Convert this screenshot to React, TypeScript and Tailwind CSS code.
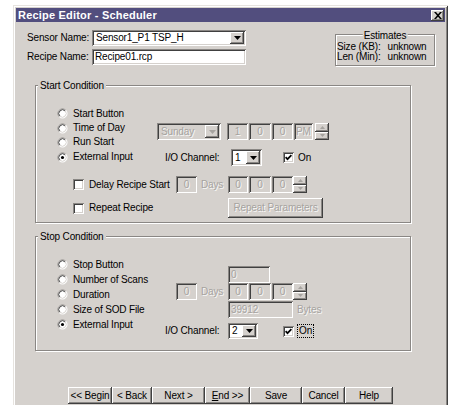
import React from "react";

const BG = "bg-[#d5d1cd]";
const RAISED =
  "shadow-[inset_-1px_-1px_0_#404040,inset_1px_1px_0_#ffffff,inset_-2px_-2px_0_#8a8784]";
const SUNKEN =
  "shadow-[inset_1px_1px_0_#8a8784,inset_-1px_-1px_0_#ffffff,inset_2px_2px_0_#404040,inset_-2px_-2px_0_#d5d1cd]";
const DIS = "text-[#a6a39f] [text-shadow:1px_1px_0_rgba(255,255,255,0.85)]";

function Arrow({ disabled, up, small }: { disabled?: boolean; up?: boolean; small?: boolean }) {
  const fill = disabled ? "#a6a39f" : "#000";
  if (small) {
    return (
      <svg width="5" height="3" viewBox="0 0 5 3">
        <path d={up ? "M0 3h5L2.5 0z" : "M0 0h5L2.5 3z"} fill={fill} />
      </svg>
    );
  }
  return (
    <svg width="7" height="4" viewBox="0 0 7 4">
      <path d="M0 0h7L3.5 4z" fill={fill} />
    </svg>
  );
}

function Combo({ value, className, disabled }: { value: string; className: string; disabled?: boolean }) {
  return (
    <div className={`${className} ${SUNKEN} p-[2px] flex shrink-0 ${disabled ? BG : "bg-white"}`}>
      <span className={`flex-1 flex items-center pl-[2px] ${disabled ? DIS : ""}`}>{value}</span>
      <div className={`w-[14px] h-full ${BG} ${RAISED} flex items-center justify-center shrink-0`}>
        <Arrow disabled={disabled} />
      </div>
    </div>
  );
}

function Box({
  children,
  className,
  disabled,
  center,
}: {
  children?: React.ReactNode;
  className: string;
  disabled?: boolean;
  center?: boolean;
}) {
  return (
    <div
      className={`${className} ${SUNKEN} shrink-0 flex items-center px-[3px] ${
        disabled ? `${BG} ${DIS}` : "bg-white"
      } ${center ? "justify-center" : ""}`}
    >
      {children}
    </div>
  );
}

function Spinner({ className }: { className: string }) {
  return (
    <div className={`${className} flex flex-col shrink-0`}>
      <div className={`flex-1 ${BG} ${RAISED} flex items-center justify-center`}>
        <Arrow small up disabled />
      </div>
      <div className={`flex-1 ${BG} ${RAISED} flex items-center justify-center`}>
        <Arrow small disabled />
      </div>
    </div>
  );
}

function Radio({ checked }: { checked?: boolean }) {
  return (
    <svg width="11" height="11" viewBox="0 0 12 12" className="shrink-0">
      <circle cx="6" cy="6" r="5" fill="#ffffff" />
      <path d="M2.46 9.54A5 5 0 0 1 9.54 2.46" stroke="#8a8784" fill="none" />
      <path d="M9.54 2.46A5 5 0 0 1 2.46 9.54" stroke="#ffffff" fill="none" />
      <path d="M3.17 8.83A4 4 0 0 1 8.83 3.17" stroke="#404040" fill="none" />
      <path d="M8.83 3.17A4 4 0 0 1 3.17 8.83" stroke="#d5d1cd" fill="none" />
      {checked && <circle cx="6" cy="6" r="1.7" fill="#000" />}
    </svg>
  );
}

function Check({ checked, className = "" }: { checked?: boolean; className?: string }) {
  return (
    <div className={`w-[11px] h-[11px] bg-white ${SUNKEN} flex items-center justify-center shrink-0 ${className}`}>
      {checked && (
        <svg width="7" height="7" viewBox="0 0 7 7">
          <polyline points="0.6,3.2 2.5,5.2 6.4,1.2" fill="none" stroke="#000" strokeWidth="1.7" />
        </svg>
      )}
    </div>
  );
}

function RadioRow({ label, checked, className }: { label: string; checked?: boolean; className: string }) {
  return (
    <div className={`flex items-center ${className}`}>
      <Radio checked={checked} />
      <span className="ml-[5px]">{label}</span>
    </div>
  );
}

function Group({
  title,
  className,
  children,
}: {
  title: string;
  className: string;
  children: React.ReactNode;
}) {
  return (
    <div className={`relative border border-[#8a8784] shadow-[inset_1px_1px_0_#ffffff,1px_1px_0_#ffffff] shrink-0 ${className}`}>
      <span className={`absolute left-[2px] top-[-6px] ${BG} px-[2px] leading-[11px]`}>{title}</span>
      {children}
    </div>
  );
}

function Btn({ children, className, disabled }: { children: React.ReactNode; className: string; disabled?: boolean }) {
  return (
    <div className={`${className} ${BG} ${RAISED} flex items-center justify-center shrink-0 ${disabled ? DIS : ""}`}>
      {children}
    </div>
  );
}

export default function App() {
  return (
    <div className="w-[451px] h-[405px] bg-white overflow-hidden font-['Liberation_Sans',Arial,sans-serif] text-[10px] leading-none tracking-[-0.15px] text-black select-none">
      <div
        className={`ml-[13px] mt-[5px] w-[435px] h-[410px] ${BG} p-[3px] flex flex-col shadow-[inset_1px_1px_0_#e6e3df,inset_-1px_-1px_0_#404040,inset_2px_2px_0_#ffffff,inset_-2px_-2px_0_#8a8784]`}
      >
        {/* caption */}
        <div className="h-[14px] bg-[#524e7e] flex items-center justify-between pl-[2px] pr-[1px] shrink-0">
          <span className="text-white font-bold text-[11px] tracking-[0.2px]">Recipe Editor - Scheduler</span>
          <div className={`w-[13px] h-[11px] ${BG} ${RAISED} flex items-center justify-center`}>
            <svg width="8" height="7" viewBox="0 0 8 7">
              <path d="M0 0h2l2 2.3L6 0h2L5 3.5 8 7H6L4 4.7 2 7H0l3-3.5z" fill="#000" />
            </svg>
          </div>
        </div>

        {/* sensor / recipe header */}
        <div className="flex mt-[8px] shrink-0">
          <div className="ml-[11px] flex flex-col gap-[3px]">
            <div className="flex items-center h-[16px]">
              <span className="w-[65px]">Sensor Name:</span>
              <Combo value="Sensor1_P1 TSP_H" className="w-[154px] h-[16px]" />
            </div>
            <div className="flex items-center h-[16px]">
              <span className="w-[65px]">Recipe Name:</span>
              <Box className="w-[154px] h-[16px]">Recipe01.rcp</Box>
            </div>
          </div>
          <div className="relative ml-auto mr-[10px] mt-[4px] w-[100px] h-[32px] border border-[#8a8784] shadow-[inset_1px_1px_0_#ffffff,1px_1px_0_#ffffff]">
            <span className={`absolute left-1/2 -translate-x-1/2 top-[-5px] ${BG} px-[1px] leading-[11px]`}>Estimates</span>
            <div className="grid grid-cols-[auto_1fr] gap-x-[7px] pt-[7px] pl-[1px] leading-[10px]">
              <span className="text-right">Size (KB):</span>
              <span>unknown</span>
              <span className="text-right">Len (Min):</span>
              <span>unknown</span>
            </div>
          </div>
        </div>

        {/* start condition */}
        <Group title="Start Condition" className="ml-[19px] mt-[19px] w-[376px] h-[138px]">
          <div className="flex">
            <div className="ml-[21px] mt-[20px] w-[100px] flex flex-col shrink-0">
              <RadioRow label="Start Button" className="h-[15px]" />
              <RadioRow label="Time of Day" className="h-[14px]" />
              <RadioRow label="Run Start" className="h-[14px]" />
              <RadioRow label="External Input" checked className="h-[16px]" />
            </div>
            <div className="flex flex-col">
              <div className="mt-[37px] flex h-[17px]">
                <Combo disabled value="Sunday" className="w-[64px] h-[17px]" />
                <Box disabled center className="ml-[6px] w-[21px] h-[17px]">1</Box>
                <Box disabled center className="ml-[1px] w-[22px] h-[17px]">0</Box>
                <Box disabled center className="ml-[1px] w-[21px] h-[17px]">0</Box>
                <Box disabled className="ml-[1px] w-[19px] h-[17px] !px-[2px]">PM</Box>
                <Spinner className="ml-[2px] w-[14px] h-[17px]" />
              </div>
              <div className="mt-[9px] flex items-center h-[17px]">
                <span className="ml-[8px] w-[66px]">I/O Channel:</span>
                <Combo value="1" className="w-[31px] h-[17px]" />
                <Check checked className="ml-[21px]" />
                <span className="ml-[4px]">On</span>
              </div>
            </div>
          </div>
          <div className="mt-[10px] flex items-center h-[17px]">
            <Check className="ml-[37px]" />
            <span className="ml-[5px] w-[87px]">Delay Recipe Start</span>
            <Box disabled center className="w-[21px] h-[17px]">0</Box>
            <span className={`ml-[4px] w-[27px] ${DIS}`}>Days</span>
            <Box disabled center className="w-[20px] h-[17px]">0</Box>
            <Box disabled center className="ml-[1px] w-[22px] h-[17px]">0</Box>
            <Box disabled center className="ml-[1px] w-[21px] h-[17px]">0</Box>
            <Spinner className="w-[14px] h-[17px]" />
          </div>
          <div className="mt-[5px] flex items-center h-[20px]">
            <Check className="ml-[37px]" />
            <span className="ml-[5px] w-[139px]">Repeat Recipe</span>
            <Btn disabled className="w-[95px] h-[20px]">Repeat Parameters</Btn>
          </div>
        </Group>

        {/* stop condition */}
        <Group title="Stop Condition" className="ml-[19px] mt-[13px] w-[376px] h-[115px]">
          <div className="flex">
            <div className="ml-[21px] mt-[20px] w-[108px] flex flex-col shrink-0">
              <RadioRow label="Stop Button" className="h-[15px]" />
              <RadioRow label="Number of Scans" className="h-[15px]" />
              <RadioRow label="Duration" className="h-[15px]" />
              <RadioRow label="Size of SOD File" className="h-[15px]" />
              <RadioRow label="External Input" checked className="h-[15px]" />
            </div>
            <div className="flex flex-col">
              <Box disabled className="mt-[29px] ml-[63px] w-[42px] h-[17px]">0</Box>
              <div className="flex items-center h-[17px]">
                <Box disabled center className="ml-[11px] w-[21px] h-[17px]">0</Box>
                <span className={`ml-[4px] w-[27px] ${DIS}`}>Days</span>
                <Box disabled center className="w-[20px] h-[17px]">0</Box>
                <Box disabled center className="ml-[1px] w-[22px] h-[17px]">0</Box>
                <Box disabled center className="ml-[1px] w-[21px] h-[17px]">0</Box>
                <Spinner className="w-[14px] h-[17px]" />
              </div>
              <div className="mt-[1px] flex items-center h-[17px]">
                <Box disabled className="ml-[63px] w-[65px] h-[17px]">39912</Box>
                <span className={`ml-[4px] ${DIS}`}>Bytes</span>
              </div>
              <div className="mt-[5px] flex items-center h-[16px]">
                <span className="w-[63px]">I/O Channel:</span>
                <Combo value="2" className="w-[30px] h-[16px]" />
                <Check checked className="ml-[25px]" />
                <span className="ml-[3px] px-[1px] py-[1px] border border-dotted border-black">On</span>
              </div>
            </div>
          </div>
        </Group>

        {/* wizard buttons */}
        <div className="mt-[36px] ml-[52px] flex shrink-0">
          <Btn className="w-[44px] h-[17px]">&lt;&lt; Begin</Btn>
          <Btn className="w-[40px] h-[17px]">&lt; Back</Btn>
          <Btn className="w-[53px] h-[17px]">Next &gt;</Btn>
          <Btn className="w-[45px] h-[17px]">
            <span>
              <span className="underline">E</span>nd &gt;&gt;
            </span>
          </Btn>
          <Btn className="w-[52px] h-[17px]">Save</Btn>
          <Btn className="w-[43px] h-[17px]">Cancel</Btn>
          <Btn className="w-[48px] h-[17px]">Help</Btn>
        </div>
      </div>
    </div>
  );
}
